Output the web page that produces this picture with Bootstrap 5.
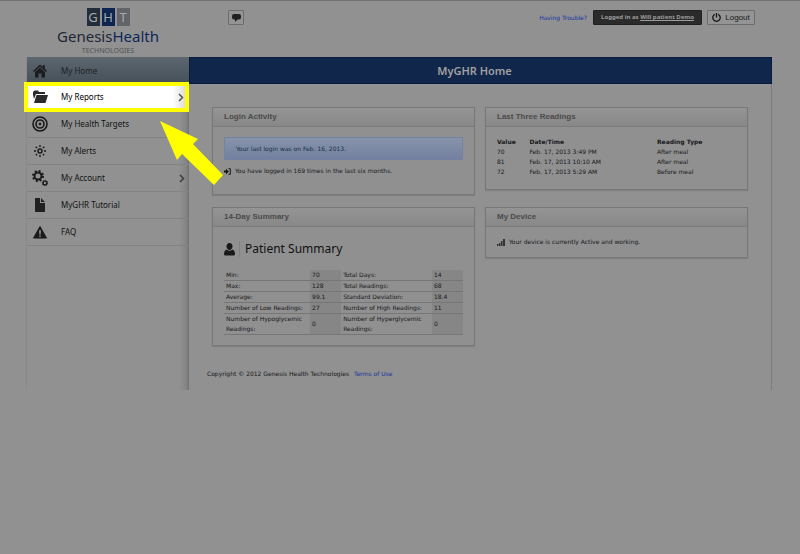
<!DOCTYPE html>
<html lang="en">
<head>
<meta charset="utf-8">
<meta name="viewport" content="width=device-width, initial-scale=1">
<title>MyGHR Home</title>
<link href="https://cdn.jsdelivr.net/npm/bootstrap@5.3.0/dist/css/bootstrap.min.css" rel="stylesheet">
<style>
:root{--page:#919191;--ink:#17181a;--blue:#10264a;--yellow:#ffff00;--ui:"Noto Sans","Open Sans",sans-serif}
body{background:var(--page);color:var(--ink);font:6px/10px "DejaVu Sans",sans-serif;border-top:1px solid #727272;min-height:100vh}
svg{display:block;flex:none}
a{text-decoration:none}
.shell{margin:0 28px 0 26px}
.topbar{height:56px;padding:7px 17px 0 30px}
.brand{width:104px;color:#1c2735;font-family:var(--ui)}
.brand-tiles{gap:2px}
.brand-tiles span{width:13px;height:18px;color:#a8a8a8;font-size:13px;line-height:18px;text-align:center}
.tile-g{background:#222d3b}.tile-h{background:#0e2551}.tile-t{background:#626469}
.brand-name{font-size:15px;line-height:20px}
.brand-name b{font-weight:400;color:#0e2759}
.brand-sub{font-size:7px;line-height:9px;color:#4e5156}
.chip{height:15px;border:1px solid #6d6d6d;border-radius:1px;background:#949494;color:var(--ink);font:inherit;margin-top:2px}
.chat{width:16px;margin-left:68px}
.trouble{color:#1733a2;margin:5px 6px 0 0}
.who{background:#2b2b2b;border-color:#202020;color:#9c9c9c;padding:0 6px;font:bold 6px/13px var(--ui);width:109px;text-align:center;margin-right:5px}
.who a{color:inherit;text-decoration:underline}
.logout{width:48px;font:8px/13px "Liberation Sans",Arial,sans-serif}
.side{width:163px;border-left:1px solid #898989;background:linear-gradient(90deg,transparent 152px,#858585 159px,#6b6b6b 163px)}
.side a{height:27px;padding:0 4px 0 5px;border-bottom:1px solid #838383;color:#111;font:8px/12px var(--ui)}
.side a svg:first-child{width:16px;height:16px;margin-right:13px}
.side .here{background:linear-gradient(#5d676f,#444f57);color:#1b2228;border-bottom:0;height:27px}
.side .picked{position:relative;margin:-2px 0 -1px -3px;height:30px;padding:0 1px 0 4px;border:4px solid var(--yellow);background:linear-gradient(90deg,#fff 145px,#ddd);color:#000}
.pane{border-right:1px solid #7c7c7c}
.pane h1{height:27px;background:var(--blue);color:#a1a1a1;font:600 11px/25px var(--ui);border:1px solid #071b40;margin:0 -1px 0 0;padding-right:12px}
.grid{padding:23px 23px 0;gap:10px}
.grid>div{flex:1 1 0;min-width:0}
.panel{border:1px solid #777;background:#909090;box-shadow:0 1px 1px #818181}
.panel h2{height:19px;margin:0;padding-left:11px;border-bottom:1px solid #7b7b7b;background:linear-gradient(#949494,#888);color:#4a4a4a;font:bold 8px/17px "Liberation Sans",Arial,sans-serif}
.inner{padding:10px 11px}
.notice{height:23px;margin-bottom:6px;padding-left:11px;line-height:21px;color:#14313f;background:linear-gradient(#8693a9,#7480a1);border:1px solid #7582a2}
.login{min-height:88px}.readings{min-height:83px}
.stack-a{margin-top:12px}.stack-b{margin-top:17px}
.readings table{width:250px}
.readings th{font-weight:700}
.readings th,.readings td{padding:0}
.sum-head{margin:4px 0 13px}
.sum-title{font:12px/16px var(--ui);margin:0;border-left:1px solid #818181;padding-left:5px;color:#111}
.sum td,.sum th{padding:0 2px;border-bottom:1px solid #767676;font-weight:400;vertical-align:middle}
.sum th{padding-right:0}
.sum td{background:#868686}
.foot{padding:23px 18px 11px}
.foot a{color:#1733a2;margin-left:3px}
.pointer{position:absolute;left:160px;top:121px;z-index:5}
</style>
<script src="https://cdn.jsdelivr.net/npm/bootstrap@5.3.0/dist/js/bootstrap.bundle.min.js"></script>
</head>
<body>
<div class="shell">
<header class="topbar d-flex align-items-start">
  <div class="brand d-flex flex-column align-items-center">
    <div class="brand-tiles d-flex"><span class="tile-g">G</span><span class="tile-h">H</span><span class="tile-t">T</span></div>
    <div class="brand-name">Genesis<b>Health</b></div>
    <div class="brand-sub">TECHNOLOGIES</div>
  </div>
  <button type="button" class="chip chat p-0 d-flex align-items-center justify-content-center" aria-label="Messages"><svg width="9" height="8" viewBox="0 0 9 8"><path d="M2 0h5q2 0 2 2v1.500q0 2-2 2H5.500L3 8V5.500H2q-2 0-2-2V2q0-2 2-2z" fill="#202020"/></svg></button>
  <div class="d-flex ms-auto align-items-start">
    <a class="trouble" href="#">Having Trouble?</a>
    <div class="chip who">Logged in as <a href="#">Will patient Demo</a></div>
    <button type="button" class="chip logout p-0 d-flex align-items-center justify-content-center gap-1"><svg width="9" height="9" viewBox="0 0 9 9" fill="none" stroke="#171717" stroke-width="1.300"><path d="M2.800 1.300a3.700 3.700 0 1 0 3.400 0M4.500 0v4.500"/></svg>Logout</button>
  </div>
</header>
<div class="d-flex">
  <nav class="side flex-shrink-0" aria-label="Main">
    <a href="#" class="here d-flex align-items-center"><svg viewBox="0 0 16 16" fill="#1b1d1f"><path d="M8 1.500l2.800 2.500V2h2v3.700L15 8l-1 1-6-5.500L2 9 1 8z"/><path d="M3 9l5-4.500L13 9v5.500H9.500v-4h-3v4H3z"/></svg>My Home</a>
    <a href="#" class="picked d-flex align-items-center"><svg viewBox="0 0 16 16" fill="#2b2b2b"><path d="M1 6V3l1.500-1.500H6L7 3h6v2H4L2 10z"/><path d="M4.500 6H16l-2.500 8H2z"/></svg>My Reports<svg class="ms-auto" width="6" height="9" viewBox="0 0 6 9"><path d="M1 1l3.500 3.500L1 8" fill="none" stroke="#555" stroke-width="1.500"/></svg></a>
    <a href="#" class="d-flex align-items-center"><svg viewBox="0 0 16 16" fill="none" stroke="#171717" stroke-width="1.600"><circle cx="8" cy="8" r="7"/><circle cx="8" cy="8" r="4"/><circle cx="8" cy="8" r="1" fill="#171717" stroke-width="1"/></svg>My Health Targets</a>
    <a href="#" class="d-flex align-items-center"><svg viewBox="0 0 16 16" fill="none" stroke="#171717" stroke-width="1.400"><circle cx="8" cy="8" r="2" /><path d="M8 2v2M8 12v2M2 8h2M12 8h2M3.800 3.800l1.300 1.300M10.900 10.900l1.300 1.300M3.800 12.200l1.300-1.300M10.900 5.100l1.300-1.300"/></svg>My Alerts</a>
    <a href="#" class="d-flex align-items-center"><svg viewBox="0 0 16 16" fill="none" stroke="#1b1b1b"><circle cx="6" cy="6" r="3.500" stroke-width="2"/><circle cx="6" cy="6" r="5" stroke-width="2" stroke-dasharray="2 1.927"/><circle cx="13" cy="13" r="1.900" stroke-width="1.400"/><circle cx="13" cy="13" r="2.700" stroke-width="1" stroke-dasharray="1.060"/></svg>My Account<svg class="ms-auto" width="6" height="9" viewBox="0 0 6 9"><path d="M1 1l3.500 3.500L1 8" fill="none" stroke="#3c3c3c" stroke-width="1.500"/></svg></a>
    <a href="#" class="d-flex align-items-center"><svg viewBox="0 0 16 16" fill="#202020"><path d="M3 1h5v5h5v9H3z"/><path d="M9 1l4 4H9z"/></svg>MyGHR Tutorial</a>
    <a href="#" class="d-flex align-items-center"><svg viewBox="0 0 16 16"><path d="M8 2.500l6.500 11.500h-13z" fill="#1b1b1b" stroke="#1b1b1b" stroke-linejoin="round"/><path d="M8 6v4.500M8 11.500v1.500" stroke="#919191" stroke-width="1.500"/></svg>FAQ</a>
  </nav>
  <main class="pane flex-grow-1">
    <h1 class="text-center">MyGHR Home</h1>
    <div class="grid d-flex align-items-start">
      <div>
        <section class="panel login"><h2>Login Activity</h2>
          <div class="inner">
            <div class="notice">Your last login was on Feb. 16, 2013.</div>
            <div class="d-flex align-items-center gap-1"><svg width="7" height="7" viewBox="0 0 7 7"><path d="M0 2.500h2V.800l2.800 2.700L2 6.200V4.500H0z" fill="#151515"/><path d="M4.500 .700h1.800v5.600H4.500" fill="none" stroke="#151515"/></svg>You have logged in 169 times in the last six months.</div>
          </div>
        </section>
        <section class="panel stack-a"><h2>14-Day Summary</h2>
          <div class="inner">
            <div class="sum-head d-flex align-items-center gap-1"><svg width="11" height="13" viewBox="0 0 11 13" fill="#1a1a1a"><path d="M5.500 0C7.500 0 8.500 1.500 8.500 3.300S7.300 7 5.500 7 2.500 5.200 2.500 3.300 3.500 0 5.500 0z"/><path d="M2.500 6.500Q5.500 9 8.500 6.500 11 7.500 11 11q0 1.500-1.500 1.500h-8Q0 12.500 0 11q0-3.500 2.500-4.500z"/></svg><h3 class="sum-title">Patient Summary</h3></div>
            <table class="sum w-100">
              <colgroup><col><col style="width:13%"><col style="width:38%"><col style="width:13%"></colgroup>
              <tbody>
              <tr><th>Min:</th><td>70</td><th>Total Days:</th><td>14</td></tr>
              <tr><th>Max:</th><td>128</td><th>Total Readings:</th><td>68</td></tr>
              <tr><th>Average:</th><td>99.1</td><th>Standard Deviation:</th><td>18.4</td></tr>
              <tr><th>Number of Low Readings:</th><td>27</td><th>Number of High Readings:</th><td>11</td></tr>
              <tr><th>Number of Hypoglycemic Readings:</th><td>0</td><th>Number of Hyperglycemic Readings:</th><td>0</td></tr>
              </tbody>
            </table>
          </div>
        </section>
      </div>
      <div>
        <section class="panel readings"><h2>Last Three Readings</h2>
          <div class="inner">
            <table>
              <colgroup><col style="width:13%"><col style="width:51%"><col></colgroup>
              <thead><tr><th>Value</th><th>Date/Time</th><th>Reading Type</th></tr></thead>
              <tbody><tr><td>70</td><td>Feb. 17, 2013 3:49 PM</td><td>After meal</td></tr>
              <tr><td>81</td><td>Feb. 17, 2013 10:10 AM</td><td>After meal</td></tr>
              <tr><td>72</td><td>Feb. 17, 2013 5:29 AM</td><td>Before meal</td></tr></tbody>
            </table>
          </div>
        </section>
        <section class="panel stack-b"><h2>My Device</h2>
          <div class="inner"><div class="d-flex align-items-center gap-1"><svg width="8" height="7" viewBox="0 0 8 7" fill="#333"><path d="M0 5h1.500v2H0zM2 4h1.500v3H2zM4 2h1.500v5H4zM6 0h2v7H6z"/></svg>Your device is currently Active and working.</div></div>
        </section>
      </div>
    </div>
    <footer class="foot">Copyright © 2012 Genesis Health Technologies <a href="#">Terms of Use</a></footer>
  </main>
</div>
</div>
<svg class="pointer" width="64" height="65" viewBox="0 0 64 65" aria-hidden="true"><path d="M0 0L38 18 33 23 63 54 54 64 22 33 17 39z" fill="#ffff00"/></svg>
</body>
</html>
